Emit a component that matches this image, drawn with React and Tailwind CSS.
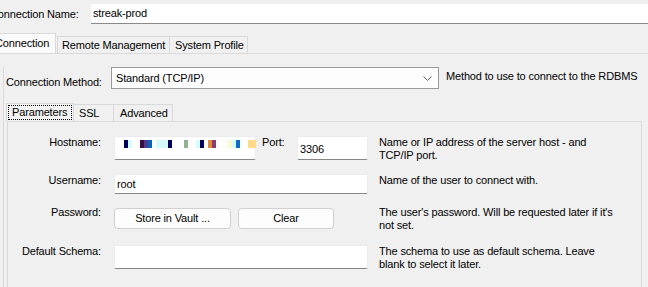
import React from 'react';

// redacted hostname: little colour blocks [width, colour]
const hostBlocks = [
  [4, '#00005a'], [4, '#d5fbfb'], [8, '#ffffff'], [4, '#3c0a46'], [4, '#483c8c'],
  [4, '#0a64b4'], [4, '#ffffff'], [12, '#d5fbfb'], [4, '#00005a'], [12, '#ffffff'],
  [4, '#8fb38f'], [8, '#ffffff'], [4, '#d5fbfb'], [4, '#00005a'], [4, '#ffffff'],
  [4, '#dc8c3c'], [4, '#8c3c6c'], [12, '#ffffff'], [4, '#fafad2'], [4, '#d5fbfb'],
  [4, '#0a6ec2'], [8, '#ffffff'], [8, '#ffd98c'],
];

const inputCls = 'bg-white border border-[#ececec] border-b-[#858585] rounded-[2px]';
const btnCls =
  'h-[21px] bg-[#fdfdfd] border border-[#d0d0d0] rounded-[4px] flex items-center justify-center';

function Label({ children, className = '' }) {
  return (
    <div className={`w-[93px] shrink-0 text-right leading-[13px] whitespace-nowrap ${className}`}>
      {children}
    </div>
  );
}

function Desc({ children, className = '' }) {
  return <div className={`ml-[11px] leading-[13px] whitespace-nowrap ${className}`}>{children}</div>;
}

export default function App() {
  return (
    <div className="w-[648px] h-[287px] overflow-hidden bg-[#f0f0f0] text-black font-['Liberation_Sans',Arial,sans-serif] text-[11px] tracking-[-0.15px]">
      {/* Connection name */}
      <div className="flex h-[20px] mt-[4px]">
        <div className="w-[91px] shrink-0 flex items-center">
          <span className="-ml-[10px] whitespace-nowrap">Connection Name:</span>
        </div>
        <div className="flex-1 bg-white border-b border-[#8a8a8a] flex items-center pl-[2px]">streak-prod</div>
      </div>

      {/* outer tabs */}
      <div className="flex items-end h-[21px] mt-[9px] border-b border-[#dadada]">
        <div className="-ml-[14px] w-[70px] h-[20px] bg-[#fafafa] border border-b-0 border-[#d9d9d9] flex items-center pl-[8px]">
          Connection
        </div>
        <div className="ml-[1px] w-[113px] h-[17px] border border-b-0 border-[#d9d9d9] flex items-center pl-[4px]">
          Remote Management
        </div>
        <div className="w-[78px] h-[17px] border border-b-0 border-l-0 border-[#d9d9d9] flex items-center pl-[5px]">
          System Profile
        </div>
      </div>

      <div className="ml-[3px] border-l border-[#dadada] h-[300px]">
        {/* connection method */}
        <div className="flex items-start h-[22px] mt-[13px]">
          <div className="w-[107px] shrink-0 pl-[2px] pt-[9px] leading-[13px] whitespace-nowrap">Connection Method:</div>
          <div className="w-[328px] h-[22px] bg-[#fdfdfd] border border-[#9a9a9a] flex items-center pl-[4px] pr-[6px]">
            <span className="flex-1">Standard (TCP/IP)</span>
            <svg width="9" height="5" viewBox="0 0 9 5">
              <polyline points="0.5,0.5 4.5,4.5 8.5,0.5" fill="none" stroke="#606060" strokeWidth="1" />
            </svg>
          </div>
          <div className="ml-[7px] pt-[3px] leading-[13px] whitespace-nowrap">Method to use to connect to the RDBMS</div>
        </div>

        {/* inner tabs */}
        <div className="flex items-end h-[18px] mt-[14px] ml-[2px]">
          <div className="w-[68px] h-[18px] bg-[#f3f3f3] border border-b-0 border-[#d9d9d9] p-[1px]">
            <div className="h-full border border-dotted border-black flex items-center pl-[3px]">Parameters</div>
          </div>
          <div className="w-[40px] h-[17px] border border-b-0 border-l-0 border-[#d9d9d9] flex items-center pl-[5px]">SSL</div>
          <div className="w-[59px] h-[17px] border border-b-0 border-l-0 border-[#d9d9d9] flex items-center pl-[6px]">Advanced</div>
        </div>

        {/* parameters panel */}
        <div className="ml-[3px] w-[635px] h-[200px] border border-[#dadada] pt-[14px]">
          {/* hostname */}
          <div className="flex items-start h-[24px]">
            <Label>Hostname:</Label>
            <div className={`ml-[13px] w-[142px] h-[24px] ${inputCls} flex items-start pt-[3px] pl-[9px]`}>
              {hostBlocks.map(([w, c], i) => (
                <span key={i} className="h-[8px] shrink-0" style={{ width: w, background: c }} />
              ))}
            </div>
            <div className="ml-[6px] w-[35px] leading-[13px]">Port:</div>
            <div className={`w-[71px] h-[24px] ${inputCls} flex items-center pl-[2px] pt-[2px]`}>3306</div>
            <Desc>
              Name or IP address of the server host - and
              <br />
              TCP/IP port.
            </Desc>
          </div>

          {/* username */}
          <div className="flex items-start h-[20px] mt-[14px]">
            <Label>Username:</Label>
            <div className={`ml-[13px] w-[254px] h-[20px] ${inputCls} flex items-center pl-[2px]`}>root</div>
            <Desc>Name of the user to connect with.</Desc>
          </div>

          {/* password */}
          <div className="flex items-start h-[21px] mt-[14px]">
            <Label className="-mt-[2px]">Password:</Label>
            <div className="ml-[13px] w-[254px] flex">
              <div className={`${btnCls} w-[117px]`}>Store in Vault ...</div>
              <div className={`${btnCls} w-[96px] ml-[7px]`}>Clear</div>
            </div>
            <Desc className="-mt-[2px]">
              The user's password. Will be requested later if it's
              <br />
              not set.
            </Desc>
          </div>

          {/* default schema */}
          <div className="flex items-start h-[24px] mt-[16px]">
            <Label>Default Schema:</Label>
            <div className={`ml-[13px] w-[254px] h-[24px] ${inputCls}`} />
            <Desc>
              The schema to use as default schema. Leave
              <br />
              blank to select it later.
            </Desc>
          </div>
        </div>
      </div>
    </div>
  );
}
